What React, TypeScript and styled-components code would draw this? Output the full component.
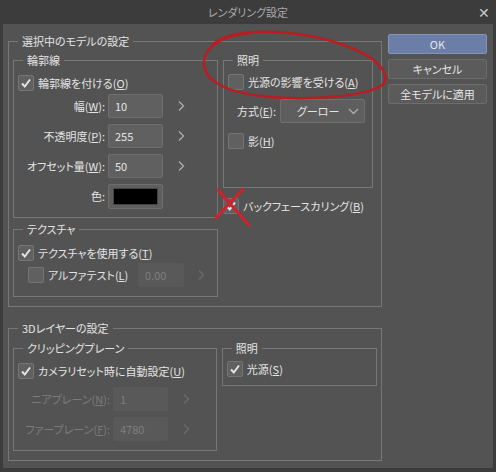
import React from "react"
import styled, { createGlobalStyle } from "styled-components"

const GlobalStyle = createGlobalStyle`
  html, body {
    margin: 0;
    padding: 0;
    background: #3c3c3c;
  }
  body {
    font-family: "Noto Sans CJK JP", "Noto Sans", sans-serif;
    font-size: 11px;
    color: #e4e4e4;
    font-feature-settings: "palt";
  }
`

const Window = styled.div`
  position: relative;
  width: 496px;
  height: 472px;
  background: #3c3c3c;
  display: flex;
  flex-direction: column;
  overflow: hidden;
`

const TitleBar = styled.div`
  flex: 0 0 24px;
  display: grid;
  grid-template-columns: 1fr auto 1fr;
  align-items: center;
  color: #a9a9a9;
  font-size: 11px;
`

const Close = styled.span`
  justify-self: end;
  padding-right: 6px;
  color: #c8c8c8;
  font-size: 14px;
  line-height: 1;
`

const Body = styled.div`
  flex: 1;
  margin: 0 3px 4px 3px;
  background: #535353;
  display: flex;
  gap: 6px;
  padding: 10px 6px 0 5px;
`

const LeftCol = styled.div`
  width: 374px;
  display: flex;
  flex-direction: column;
  gap: 14px;
`

const Group = styled.fieldset<{ $pad?: string; $mt?: number }>`
  margin: ${(p) => p.$mt ?? 0}px 0 0 0;
  border: 1px solid #777;
  padding: ${(p) => p.$pad ?? "5px 4px 9px 4px"};
  min-width: 0;
`

const Legend = styled.legend`
  padding: 0 4px;
  margin-left: 5px;
  line-height: 14px;
  font-size: 11px;
  color: #e4e4e4;
`

const Split = styled.div`
  display: flex;
  gap: 5px;
  align-items: flex-start;
`

const Column = styled.div<{ $w: number }>`
  width: ${(p) => p.$w}px;
  display: flex;
  flex-direction: column;
`

const Stack = styled.div<{ $gap: number; $mt?: number }>`
  display: flex;
  flex-direction: column;
  gap: ${(p) => p.$gap}px;
  margin-top: ${(p) => p.$mt ?? 0}px;
`

const CheckRow = styled.label<{ $indent?: number; $mt?: number; $w?: number }>`
  display: flex;
  align-items: center;
  gap: 4px;
  height: 16px;
  width: ${(p) => (p.$w ? `${p.$w}px` : "auto")};
  flex: none;
  margin-left: ${(p) => p.$indent ?? 0}px;
  margin-top: ${(p) => p.$mt ?? 0}px;
  color: #e4e4e4;
  white-space: nowrap;
`

const Box = styled.span`
  width: 14px;
  height: 14px;
  flex: 0 0 14px;
  border: 1px solid #757575;
  border-radius: 2px;
  background: #606060;
  display: flex;
  align-items: center;
  justify-content: center;
`

const FieldRow = styled.div<{ $mt?: number }>`
  display: flex;
  align-items: center;
  height: 24px;
  margin-top: ${(p) => p.$mt ?? 0}px;
`

const FieldLabel = styled.span<{ $w: number; $disabled?: boolean }>`
  flex: none;
  width: ${(p) => p.$w}px;
  min-width: 0;
  display: flex;
  justify-content: flex-end;
  padding-right: 3px;
  box-sizing: border-box;
  color: ${(p) => (p.$disabled ? "#7c7c7c" : "#e4e4e4")};
  white-space: nowrap;
`

const NumberInput = styled.div<{ $w?: number; $disabled?: boolean }>`
  flex: none;
  width: ${(p) => p.$w ?? 55}px;
  height: 24px;
  box-sizing: border-box;
  border: 1px solid ${(p) => (p.$disabled ? "#595959" : "#6e6e6e")};
  border-radius: 2px;
  background: ${(p) => (p.$disabled ? "#595959" : "#606060")};
  color: ${(p) => (p.$disabled ? "#7e7e7e" : "#e4e4e4")};
  padding-left: 6px;
  display: flex;
  align-items: center;
`

const Swatch = styled.div`
  width: 55px;
  height: 25px;
  box-sizing: border-box;
  border: 1px solid #6e6e6e;
  border-radius: 2px;
  background: #5e5e5e;
  padding: 3px 4px;
  display: flex;
`

const SwatchFill = styled.span`
  flex: 1;
  background: #000;
  border: 1px solid #444;
`

const Arrow = styled.span<{ $ml: number }>`
  margin-left: ${(p) => p.$ml}px;
  display: flex;
`

const Select = styled.div`
  width: 85px;
  height: 24px;
  box-sizing: border-box;
  border: 1px solid #6e6e6e;
  border-radius: 2px;
  background: #5e5e5e;
  display: flex;
  align-items: center;
  justify-content: space-between;
  padding: 0 5px 0 16px;
`

const SelectRow = styled.div`
  display: flex;
  align-items: center;
  margin: 9px 0 0 9px;
  gap: 4px;
  height: 24px;
`

const U = styled.u`
  text-underline-offset: 1px;
`

const Buttons = styled.div`
  width: 99px;
  display: flex;
  flex-direction: column;
  gap: 5px;
`

const Button = styled.button<{ $primary?: boolean }>`
  height: 20px;
  margin: 0;
  padding: 0;
  font: inherit;
  font-size: 11px;
  color: #e6e6e6;
  border-radius: 2px;
  border: 1px solid ${(p) => (p.$primary ? "#8494b6" : "#6c6c6c")};
  background: ${(p) => (p.$primary ? "#6a7ea8" : "#5b5b5b")};
`

const Overlay = styled.svg`
  position: absolute;
  left: 0;
  top: 0;
  pointer-events: none;
`

const Check = () => (
  <svg width="12" height="12" viewBox="0 0 12 12">
    <polyline points="2,6.5 4.8,9.5 10,2.5" fill="none" stroke="#e4e4e4" strokeWidth="2" />
  </svg>
)

function CheckBox({
  checked,
  children,
  indent,
  mt,
  w,
}: {
  checked?: boolean
  children: React.ReactNode
  indent?: number
  mt?: number
  w?: number
}) {
  return (
    <CheckRow $indent={indent} $mt={mt} $w={w}>
      <Box>{checked && <Check />}</Box>
      <span>{children}</span>
    </CheckRow>
  )
}

const Chevron = ({ disabled }: { disabled?: boolean }) => (
  <svg width="7" height="12" viewBox="0 0 7 12">
    <polyline
      points="1,1.5 5.5,6 1,10.5"
      fill="none"
      stroke={disabled ? "#6c6c6c" : "#adadad"}
      strokeWidth="1.3"
    />
  </svg>
)

function Field({
  label,
  value,
  labelW,
  disabled,
}: {
  label: React.ReactNode
  value: string
  labelW: number
  disabled?: boolean
}) {
  return (
    <FieldRow>
      <FieldLabel $w={labelW} $disabled={disabled}>
        <span>{label}</span>
      </FieldLabel>
      <NumberInput $disabled={disabled}>{value}</NumberInput>
      <Arrow $ml={15}>
        <Chevron disabled={disabled} />
      </Arrow>
    </FieldRow>
  )
}

export default function App() {
  return (
    <>
      <GlobalStyle />
      <Window>
        <TitleBar>
          <span />
          <span>レンダリング設定</span>
          <Close>✕</Close>
        </TitleBar>
        <Body>
          <LeftCol>
            <Group>
              <Legend>選択中のモデルの設定</Legend>
              <Split>
                <Column $w={205}>
                  <Group $pad="8px 4px 9px 4px">
                    <Legend>輪郭線</Legend>
                    <CheckBox checked>
                      輪郭線を付ける(<U>O</U>)
                    </CheckBox>
                    <Stack $gap={6} $mt={3}>
                      <Field labelW={90} label={<>幅(<U>W</U>):</>} value="10" />
                      <Field labelW={90} label={<>不透明度(<U>P</U>):</>} value="255" />
                      <Field labelW={90} label={<>オフセット量(<U>W</U>):</>} value="50" />
                      <FieldRow>
                        <FieldLabel $w={90}>色:</FieldLabel>
                        <Swatch>
                          <SwatchFill />
                        </Swatch>
                      </FieldRow>
                    </Stack>
                  </Group>
                  <Group $pad="9px 4px 9px 4px" $mt={4}>
                    <Legend>テクスチャ</Legend>
                    <CheckBox checked>
                      テクスチャを使用する(<U>T</U>)
                    </CheckBox>
                    <FieldRow $mt={2}>
                      <CheckBox indent={10} w={110}>
                        アルファテスト(<U>L</U>)
                      </CheckBox>
                      <NumberInput $w={46} $disabled>
                        0.00
                      </NumberInput>
                      <Arrow $ml={14}>
                        <Chevron disabled />
                      </Arrow>
                    </FieldRow>
                  </Group>
                </Column>
                <Column $w={150}>
                  <Group $pad="7px 4px 38px 4px">
                    <Legend>照明</Legend>
                    <CheckBox>
                      光源の影響を受ける(<U>A</U>)
                    </CheckBox>
                    <SelectRow>
                      <span>
                        方式(<U>E</U>):
                      </span>
                      <Select>
                        <span>グーロー</span>
                        <svg width="11" height="7" viewBox="0 0 11 7">
                          <polyline points="1,1 5.5,5.5 10,1" fill="none" stroke="#adadad" strokeWidth="1.3" />
                        </svg>
                      </Select>
                    </SelectRow>
                    <CheckBox mt={10}>
                      影(<U>H</U>)
                    </CheckBox>
                  </Group>
                  <CheckBox checked mt={10}>
                    バックフェースカリング(<U>B</U>)
                  </CheckBox>
                </Column>
              </Split>
            </Group>

            <Group $pad="6px 4px 9px 4px">
              <Legend>3Dレイヤーの設定</Legend>
              <Split>
                <Column $w={205}>
                  <Group $pad="8px 4px 9px 4px">
                    <Legend>クリッピングプレーン</Legend>
                    <CheckBox checked>
                      カメラリセット時に自動設定(<U>U</U>)
                    </CheckBox>
                    <Stack $gap={6} $mt={8}>
                      <Field labelW={95} disabled label={<>ニアプレーン(<U>N</U>):</>} value="1" />
                      <Field labelW={95} disabled label={<>ファープレーン(<U>F</U>):</>} value="4780" />
                    </Stack>
                  </Group>
                </Column>
                <Column $w={156}>
                  <Group $pad="6px 4px 8px 4px">
                    <Legend>照明</Legend>
                    <CheckBox checked>
                      光源(<U>S</U>)
                    </CheckBox>
                  </Group>
                </Column>
              </Split>
            </Group>
          </LeftCol>

          <Buttons>
            <Button $primary>OK</Button>
            <Button>キャンセル</Button>
            <Button>全モデルに適用</Button>
          </Buttons>
        </Body>

        <Overlay width="496" height="472" viewBox="0 0 496 472">
          <path
            d="M 250 33 C 225 35, 205 45, 204 62 C 203 80, 225 93, 270 97 C 310 100, 362 97, 381 86 C 393 78, 380 60, 356 50 C 330 38, 290 30, 255 32 C 235 33, 220 38, 212 45"
            fill="none"
            stroke="#c4161c"
            strokeWidth="2.5"
            strokeLinecap="round"
            opacity="0.9"
          />
          <line x1="218" y1="190" x2="249" y2="225" stroke="#d0222a" strokeWidth="3" strokeLinecap="round" />
          <line x1="243" y1="189" x2="216" y2="218" stroke="#d0222a" strokeWidth="3" strokeLinecap="round" />
        </Overlay>
      </Window>
    </>
  )
}
